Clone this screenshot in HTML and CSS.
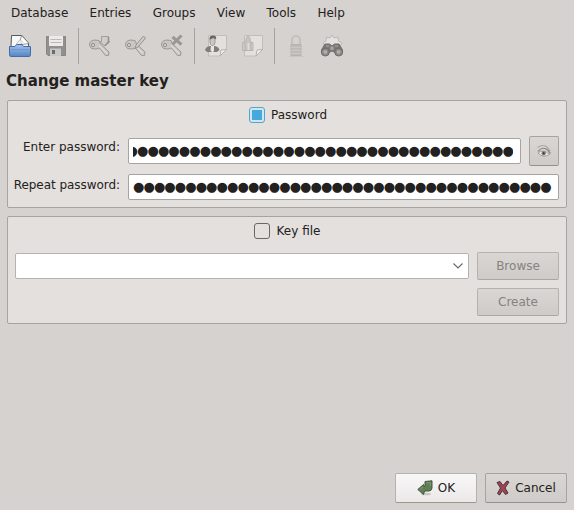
FILE: index.html
```html
<!DOCTYPE html>
<html lang="en">
<head>
<meta charset="utf-8">
<title>Change master key</title>
<link rel="stylesheet" href="styles.css">
</head>
<body>
<nav class="menubar">
  <span>Database</span><span>Entries</span><span>Groups</span><span>View</span><span>Tools</span><span>Help</span>
</nav>
<div class="toolbar">
  <svg class="tool" viewBox="0 0 24 24">
    <defs>
      <linearGradient id="blue" x1="0" y1="0" x2="0" y2="1"><stop offset="0" stop-color="#a5c3e8"/><stop offset="1" stop-color="#5485c7"/></linearGradient>
    </defs>
    <path d="M3 13 3.500 1.500H14L20.500 9V14H3Z" fill="#f8f8f7" stroke="#55585c"/>
    <path d="M13.500 1.500 21 9.500 14 10.500 12 8Z" fill="#fff" stroke="#777b7e" stroke-width=".8"/>
    <path d="M8 10.500 12 5.500 15 8.500" fill="#eee" stroke="#aaa" stroke-width=".7"/>
    <path d="M1.500 12.500H7L8.500 10.500H14L15.500 12.500H22.500V20.500Q22.500 22.500 21 22.500H3Q1.500 22.500 1.500 20.500Z" fill="url(#blue)" stroke="#446da8"/>
    <path d="M2.500 15.500H21.500" stroke="#6d9bd5"/>
  </svg>
  <svg class="tool" viewBox="0 0 24 24">
    <path d="M2.500 2.500H21.500V21.500H4L2.500 20Z" fill="#91908e" stroke="#868583"/>
    <path d="M5 2H19V12H5Z" fill="#eceae8"/>
    <path d="M6.500 5.500H17.500M6.500 8.500H17.500" stroke="#bbb9b7"/>
    <path d="M6 14.500H17V22H6Z" fill="#cac8c6"/><path d="M8 16H11V20H8Z" fill="#6d6c6a"/>
  </svg>
  <i class="sep"></i>
  <svg class="tool" viewBox="0 0 24 24">
    <path class="metal" d="M1.500 11.500Q1 7 6 6L11 6.500 12.500 10 21 18 20.500 21.500 17.500 21.500 11.500 14 8 15 3.500 14.500Z"/>
    <path class="shine" d="M11 11.500 19 19.500"/><circle class="hole" cx="5" cy="11" r="1.600"/>
    <path d="M13.500 2.500H20.500V7.500H22L17 12 11.500 7.500H13.500Z" fill="#d0cdca" stroke="#a09d9a"/>
    <path d="M20.500 3V8L17 11.500" stroke="#92908d" fill="none" stroke-width="1.500"/>
  </svg>
  <svg class="tool" viewBox="0 0 24 24">
    <path class="metal" d="M1.500 11.500Q1 7 6 6L11 6.500 12.500 10 21 18 20.500 21.500 17.500 21.500 11.500 14 8 15 3.500 14.500Z"/>
    <path class="shine" d="M11 11.500 19 19.500"/><circle class="hole" cx="5" cy="11" r="1.600"/>
    <path d="M11 14.500 12 11 19.500 2 21.500 4 14 13Z" fill="#cecbc8" stroke="#96938f"/>
  </svg>
  <svg class="tool" viewBox="0 0 24 24">
    <path class="metal" d="M1.500 11.500Q1 7 6 6L11 6.500 12.500 10 21 18 20.500 21.500 17.500 21.500 11.500 14 8 15 3.500 14.500Z"/>
    <path class="shine" d="M11 11.500 19 19.500"/><circle class="hole" cx="5" cy="11" r="1.600"/>
    <path d="M12.500 3 21.500 10.500M21.500 1.500 12.500 10.500" stroke="#9a9794" stroke-width="3"/>
  </svg>
  <i class="sep"></i>
  <svg class="tool" viewBox="0 0 24 24">
    <path class="paper" d="M4.500 1.500H22.500V15L16 22H4.500Z"/><path class="fold" d="M22.500 15.500 16 22 17 16Z"/>
    <path d="M1 16Q2 12.500 6 12H11Q15 13 15.500 16L13 18H3Z" fill="#807e7c"/>
    <path d="M7 11H10L10 17 8.500 18.500 6.500 16.500Z" fill="#e8e6e3"/>
    <ellipse cx="8.500" cy="7" rx="2.500" ry="4.500" fill="#cbc8c5" stroke="#9a9794"/><path d="M5.500 5.500Q5 1.500 9 1.500T12 5.500L10 4Z" fill="#696765"/>
  </svg>
  <svg class="tool" viewBox="0 0 24 24">
    <path class="paper" d="M4.500 1.500H22.500V15L16 22H4.500Z"/><path class="fold" d="M22.500 15.500 16 22 17 16Z"/>
    <path d="M2.500 8.500H13V16.500H2.500Z" fill="#cecbc8" stroke="#b9b6b3"/>
    <path d="M5 16.500V8Q6 6.500 6.500 3Q8 1 9.500 3L11 8V16.500Z" fill="#c6c3c0" stroke="#b0adaa" stroke-width=".7"/>
    <path d="M8.500 9V16" stroke="#dedbd8" stroke-width="2"/>
  </svg>
  <i class="sep"></i>
  <svg class="tool" viewBox="0 0 24 24">
    <path d="M5 22.500H20" stroke="#c9c6c3"/>
    <path d="M8 11V6Q8 2 12 2T16 6V11" fill="none" stroke="#c0bdba" stroke-width="1.600"/>
    <path d="M7 10.500H17V21.500H7Z" fill="#bebbb8" stroke="#b5b2af"/>
    <path d="M7 13.500H17M7 16.500H17M7 19.500H17" stroke="#cbc8c5"/>
  </svg>
  <svg class="tool" viewBox="0 0 24 24">
    <path d="M12 1 14 4 18 3 18.500 7 22 9 19 13H5L3 9 6 7 6.500 3 10 4Z" fill="#e4e2e0" stroke="#bbb8b5"/>
    <path d="M1.500 16 5 10 9.500 10 12 12 14.500 10 19 10 22.500 16 20 20 15 18.500 12 17 9 18.500 4 20Z" fill="#7c7a78" stroke="#6f6d6b"/>
    <circle cx="5.300" cy="18" r="4" fill="#8d8a88" stroke="#6d6b69"/><circle cx="18.700" cy="18" r="4" fill="#8d8a88" stroke="#6d6b69"/>
    <circle cx="5.300" cy="18" r="1.800" fill="#b4b1ae"/><circle cx="18.700" cy="18" r="1.800" fill="#b4b1ae"/>
    <path d="M10.500 12.500H13.500V16H10.500Z" fill="#a8a5a2"/><path d="M6 12 9 12M15 12 18 12" stroke="#aaa7a4"/>
  </svg>
</div>
<h1>Change master key</h1>
<main>
  <section class="panel">
    <div class="check check-password"><span class="box on"></span>Password</div>
    <div class="row enter">
      <label>Enter password:</label>
      <div class="field tail"><span class="dots">●●●●●●●●●●●●●●●●●●●●●●●●●●●●●●●●●●●●●</span></div>
      <div class="button eye">
        <svg viewBox="0 0 16 16" width="16" height="16">
          <path d="M1.500 4.500Q7 .5 11.500 4.500L14 8" fill="none" stroke="#aaa7a4" stroke-width="1.200"/>
          <path d="M2 8.500Q7 2.500 12 7.500L14.500 10.500" fill="none" stroke="#8b8987" stroke-width="1.200"/>
          <path d="M2 10Q7 5.500 13.500 11.500Q7 15.500 2 10Z" fill="#eeecea" stroke="#918f8d" stroke-width=".8"/>
          <circle cx="7.700" cy="10.200" r="2.200" fill="#888684"/><circle cx="7.700" cy="10.200" r="1" fill="#343332"/>
        </svg>
      </div>
    </div>
    <div class="row repeat">
      <label>Repeat password:</label>
      <div class="field"><span class="dots">●●●●●●●●●●●●●●●●●●●●●●●●●●●●●●●●●●●●●●●●</span></div>
    </div>
  </section>
  <section class="panel">
    <div class="check check-file"><span class="box"></span>Key file</div>
    <div class="row file">
      <div class="field combo"><svg width="10" height="6" viewBox="0 0 10 6"><path d="M.5.500 5 5 9.500.500" fill="none" stroke="#6b6967" stroke-width="1.100"/></svg></div>
      <div class="stack"><div class="button disabled">Browse</div><div class="button disabled">Create</div></div>
    </div>
  </section>
</main>
<footer>
  <div class="button ok">
    <svg width="16" height="16" viewBox="0 0 16 16">
      <ellipse cx="9" cy="14" rx="5" ry="1.300" fill="#c6c6c3"/>
      <path d="M8 1.500 15 .8V8Q14.500 11 12 11H7.500L6.500 14.500 .8 9.500 6.500 4.500 7 6.500H8Z" fill="#5f7f55" stroke="#46573d"/>
      <path d="M9 3 13.500 2.500V6M3 9.500 6 7" fill="none" stroke="#89a17e" stroke-width=".8"/>
    </svg>OK
  </div>
  <div class="button cancel">
    <svg width="14" height="16" viewBox="0 0 14 16">
      <path d="M1 2.500 4 1.500 7 5.500 11 1 13 2 9 8 12 13 9.500 14.500 6.500 10.500 3.500 15 1.500 13.500 4.500 8Z" fill="#a34352" stroke="#49333a"/>
    </svg>Cancel
  </div>
</footer>
</body>
</html>
```
FILE: styles.css
```css
* { box-sizing: border-box; }
body {
  margin: 0;
  width: 574px;
  height: 510px;
  display: flex;
  flex-direction: column;
  overflow: hidden;
  background: #d6d2cf;
  color: #232120;
  font: 12px/14px "DejaVu Sans", sans-serif;
}
svg { display: block; flex: none; }
.menubar { display: flex; gap: 21.3px; height: 28px; padding: 6px 0 0 11px; }
.toolbar { display: flex; align-items: center; height: 36px; padding-left: 2px; }
.tool { width: 24px; height: 24px; margin: 0 6px; }
.sep { width: 1px; height: 36px; margin: 0 3px 0 4px; background: #a5a19e; }
.metal { fill: #c9c6c3; stroke: #9c9996; }
.shine { fill: none; stroke: #dedbd8; stroke-width: 1.5; }
.hole { fill: #d9d6d3; stroke: #908d8a; }
.paper { fill: #e3e0dd; stroke: #c1beba; }
.fold { fill: #f1efed; stroke: #b5b2ae; }
h1 { margin: 7px 0 0 6px; height: 29px; font-size: 15px; line-height: 20px; font-weight: bold; }
main { display: flex; flex-direction: column; gap: 8px; margin: 0 7px; }
.panel { height: 108px; padding: 6px 7px; border: 1px solid #a7a3a0; border-radius: 2px; background: #e4e0dd; }
.check { display: flex; align-items: center; justify-content: center; height: 16px; gap: 6px; }
.check-password { padding-left: 2px; }
.check-file { gap: 7px; }
.box { width: 16px; height: 16px; border: 1px solid #6a6765; border-radius: 3px; }
.box.on { padding: 2px; border-color: #56a3ca; background: #43a9df content-box; box-shadow: inset 0 0 0 2px #d3e6ef; }
.row { display: flex; }
.enter { height: 30px; margin-top: 13px; align-items: center; }
.repeat { height: 26px; margin-top: 8px; }
label { width: 107px; margin: 0 8px 0 -2px; text-align: right; white-space: nowrap; }
.enter label { margin-top: -8px; }
.repeat label { padding-top: 4px; letter-spacing: -.05px; }
.field { display: flex; flex: 1; height: 26px; min-width: 0; padding: 0 4px; border: 1px solid #a7a3a0; border-radius: 2px; background: #fff; }
.dots { display: flex; flex: 1; overflow: hidden; white-space: nowrap; font-size: 13px; letter-spacing: -.9px; line-height: 24px; }
.tail .dots { justify-content: flex-end; }
.tail { padding-right: 7px; }
.button { display: flex; align-items: center; justify-content: center; border: 1px solid #a7a3a0; border-bottom-color: #94908d; border-radius: 2px; background: linear-gradient(#dad6d4, #cfcbc8); }
.eye { width: 30px; height: 30px; margin-left: 8px; }
.file { margin-top: 13px; gap: 8px; }
.combo { margin-top: 1px; align-items: center; justify-content: flex-end; padding-right: 5px; border-color: #b6b2af; }
.stack { display: grid; gap: 8px; width: 82px; }
.stack .button { height: 28px; }
.disabled { color: #858280; border-color: #b5b1ae; border-bottom-color: #aaa6a3; }
footer { display: flex; justify-content: flex-end; gap: 8px; margin: auto 7px 7px; }
footer .button { width: 82px; height: 30px; gap: 5px; }
.ok { background: linear-gradient(#f8f7f7, #ebe9e8); border-color: #b5b1ae; border-bottom-color: #999592; }
```
